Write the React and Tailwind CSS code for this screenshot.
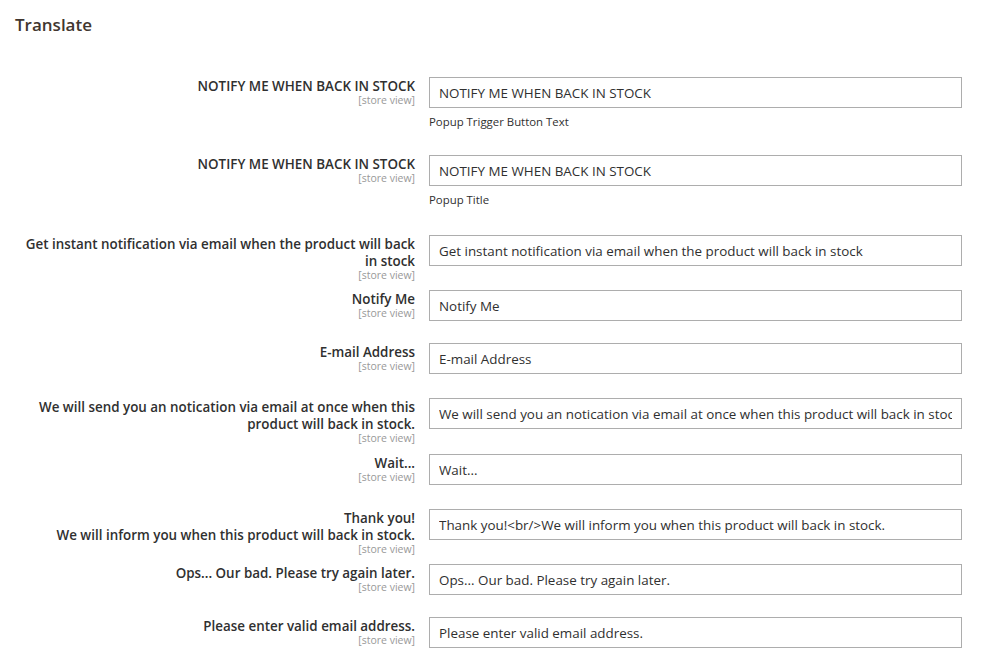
import React from "react";

const rows = [
  { label: ["NOTIFY ME WHEN BACK IN STOCK"], value: "NOTIFY ME WHEN BACK IN STOCK", note: "Popup Trigger Button Text", mb: "mb-[26px]" },
  { label: ["NOTIFY ME WHEN BACK IN STOCK"], value: "NOTIFY ME WHEN BACK IN STOCK", note: "Popup Title", mb: "mb-[28px]" },
  { label: ["Get instant notification via email when the product will back in stock"], value: "Get instant notification via email when the product will back in stock", mb: "mb-[23px]" },
  { label: ["Notify Me"], value: "Notify Me", mb: "mb-[21px]" },
  { label: ["E-mail Address"], value: "E-mail Address", mb: "mb-[23px]" },
  { label: ["We will send you an notication via email at once when this product will back in stock."], value: "We will send you an notication via email at once when this product will back in stock.", mb: "mb-[24px]" },
  { label: ["Wait..."], value: "Wait...", mb: "mb-[23px]" },
  { label: ["Thank you!", "We will inform you when this product will back in stock."], value: "Thank you!<br/>We will inform you when this product will back in stock.", mb: "mb-[23px]" },
  { label: ["Ops... Our bad. Please try again later."], value: "Ops... Our bad. Please try again later.", mb: "mb-[21px]" },
  { label: ["Please enter valid email address."], value: "Please enter valid email address.", mb: "mb-[21px]" },
];

export default function App() {
  return (
    <div className="w-[1000px] h-[667px] overflow-hidden bg-white text-[#303030]" style={{ fontFamily: '"Open Sans", "Noto Sans", sans-serif' }}>
      <div className="pl-[15px] pt-[14px]">
        <h2 className="text-[17px] leading-[22px] font-semibold text-[#41362f]">Translate</h2>
      </div>
      <div className="mt-[41px]">
        {rows.map((r, i) => (
          <div key={i} className={`flex items-start ${r.mb}`}>
            <div className="w-[415px] h-[32px] shrink-0 pl-[15px] pt-[1px] text-right">
              <div className="relative text-[13.4px] leading-[17px] font-semibold">
                {r.label.map((l, j) => (
                  <div key={j}>{l}</div>
                ))}
                <span className="absolute right-0 top-full -mt-[2px] whitespace-nowrap text-[10.5px] leading-[14px] font-normal text-[#999999]">[store view]</span>
              </div>
            </div>
            <div className="ml-[14px] w-[533px] shrink-0">
              <input
                readOnly
                value={r.value}
                className="block w-full h-[31px] border border-[#adadad] bg-white px-[9px] text-[13.4px] text-[#303030] outline-none"
                style={{ fontFamily: '"Open Sans", "Noto Sans", sans-serif' }}
              />
              {r.note && (
                <div className="mt-[6px] text-[11.4px] leading-[15px] text-[#303030]">{r.note}</div>
              )}
            </div>
          </div>
        ))}
      </div>
    </div>
  );
}
